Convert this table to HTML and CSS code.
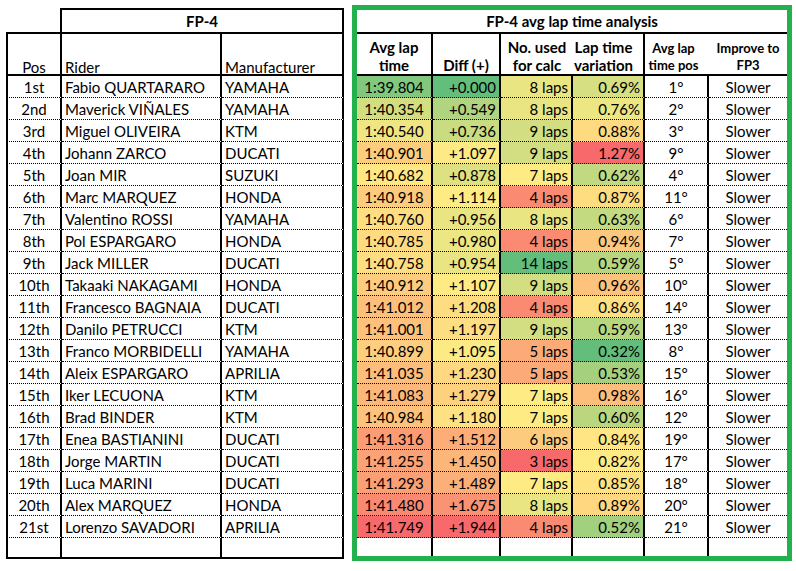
FILE: index.html
```html
<!DOCTYPE html>
<html>
<head>
<meta charset="utf-8">
<title>FP-4 avg lap time analysis</title>
<link rel="stylesheet" href="styles.css">
</head>
<body>
<div class="page">
  <table class="fp">
    <colgroup><col class="w-pos"><col class="w-rider"><col class="w-man"></colgroup>
    <thead>
      <tr class="title"><th class="blank"></th><th colspan="2" class="ttl">FP-4</th></tr>
      <tr class="hdr"><th class="pos">Pos</th><th>Rider</th><th>Manufacturer</th></tr>
    </thead>
    <tbody>
      <tr><td class="pos">1st</td><td>Fabio QUARTARARO</td><td>YAMAHA</td></tr>
      <tr><td class="pos">2nd</td><td>Maverick VIÑALES</td><td>YAMAHA</td></tr>
      <tr><td class="pos">3rd</td><td>Miguel OLIVEIRA</td><td>KTM</td></tr>
      <tr><td class="pos">4th</td><td>Johann ZARCO</td><td>DUCATI</td></tr>
      <tr><td class="pos">5th</td><td>Joan MIR</td><td>SUZUKI</td></tr>
      <tr><td class="pos">6th</td><td>Marc MARQUEZ</td><td>HONDA</td></tr>
      <tr><td class="pos">7th</td><td>Valentino ROSSI</td><td>YAMAHA</td></tr>
      <tr><td class="pos">8th</td><td>Pol ESPARGARO</td><td>HONDA</td></tr>
      <tr><td class="pos">9th</td><td>Jack MILLER</td><td>DUCATI</td></tr>
      <tr><td class="pos">10th</td><td>Takaaki NAKAGAMI</td><td>HONDA</td></tr>
      <tr><td class="pos">11th</td><td>Francesco BAGNAIA</td><td>DUCATI</td></tr>
      <tr><td class="pos">12th</td><td>Danilo PETRUCCI</td><td>KTM</td></tr>
      <tr><td class="pos">13th</td><td>Franco MORBIDELLI</td><td>YAMAHA</td></tr>
      <tr><td class="pos">14th</td><td>Aleix ESPARGARO</td><td>APRILIA</td></tr>
      <tr><td class="pos">15th</td><td>Iker LECUONA</td><td>KTM</td></tr>
      <tr><td class="pos">16th</td><td>Brad BINDER</td><td>KTM</td></tr>
      <tr><td class="pos">17th</td><td>Enea BASTIANINI</td><td>DUCATI</td></tr>
      <tr><td class="pos">18th</td><td>Jorge MARTIN</td><td>DUCATI</td></tr>
      <tr><td class="pos">19th</td><td>Luca MARINI</td><td>DUCATI</td></tr>
      <tr><td class="pos">20th</td><td>Alex MARQUEZ</td><td>HONDA</td></tr>
      <tr><td class="pos">21st</td><td>Lorenzo SAVADORI</td><td>APRILIA</td></tr>
      <tr class="empty"><td class="pos"></td><td></td><td></td></tr>
    </tbody>
  </table>

  <div class="analysis">
    <table class="an">
      <colgroup><col class="w1"><col class="w2"><col class="w3"><col class="w4"><col class="w5"><col class="w6"></colgroup>
      <thead>
        <tr class="title"><th colspan="6" class="ttl">FP-4 avg lap time analysis</th></tr>
        <tr class="hdr">
          <th class="sep">Avg lap<br>time</th>
          <th class="sep">Diff (+)</th>
          <th>No. used<br>for calc</th>
          <th class="sep var">Lap time<br>variation</th>
          <th class="small apos">Avg lap<br>time pos</th>
          <th class="small">Improve to<br>FP3</th>
        </tr>
      </thead>
      <tbody>
        <tr><td class="v-avg">1:39.804</td><td class="v-diff">+0.000</td><td class="v-laps">8 laps</td><td class="v-var">0.69%</td><td class="rank">1°</td><td class="imp">Slower</td></tr>
        <tr><td class="v-avg">1:40.354</td><td class="v-diff">+0.549</td><td class="v-laps">8 laps</td><td class="v-var">0.76%</td><td class="rank">2°</td><td class="imp">Slower</td></tr>
        <tr><td class="v-avg">1:40.540</td><td class="v-diff">+0.736</td><td class="v-laps">9 laps</td><td class="v-var">0.88%</td><td class="rank">3°</td><td class="imp">Slower</td></tr>
        <tr><td class="v-avg">1:40.901</td><td class="v-diff">+1.097</td><td class="v-laps">9 laps</td><td class="v-var">1.27%</td><td class="rank">9°</td><td class="imp">Slower</td></tr>
        <tr><td class="v-avg">1:40.682</td><td class="v-diff">+0.878</td><td class="v-laps">7 laps</td><td class="v-var">0.62%</td><td class="rank">4°</td><td class="imp">Slower</td></tr>
        <tr><td class="v-avg">1:40.918</td><td class="v-diff">+1.114</td><td class="v-laps">4 laps</td><td class="v-var">0.87%</td><td class="rank">11°</td><td class="imp">Slower</td></tr>
        <tr><td class="v-avg">1:40.760</td><td class="v-diff">+0.956</td><td class="v-laps">8 laps</td><td class="v-var">0.63%</td><td class="rank">6°</td><td class="imp">Slower</td></tr>
        <tr><td class="v-avg">1:40.785</td><td class="v-diff">+0.980</td><td class="v-laps">4 laps</td><td class="v-var">0.94%</td><td class="rank">7°</td><td class="imp">Slower</td></tr>
        <tr><td class="v-avg">1:40.758</td><td class="v-diff">+0.954</td><td class="v-laps">14 laps</td><td class="v-var">0.59%</td><td class="rank">5°</td><td class="imp">Slower</td></tr>
        <tr><td class="v-avg">1:40.912</td><td class="v-diff">+1.107</td><td class="v-laps">9 laps</td><td class="v-var">0.96%</td><td class="rank">10°</td><td class="imp">Slower</td></tr>
        <tr><td class="v-avg">1:41.012</td><td class="v-diff">+1.208</td><td class="v-laps">4 laps</td><td class="v-var">0.86%</td><td class="rank">14°</td><td class="imp">Slower</td></tr>
        <tr><td class="v-avg">1:41.001</td><td class="v-diff">+1.197</td><td class="v-laps">9 laps</td><td class="v-var">0.59%</td><td class="rank">13°</td><td class="imp">Slower</td></tr>
        <tr><td class="v-avg">1:40.899</td><td class="v-diff">+1.095</td><td class="v-laps">5 laps</td><td class="v-var">0.32%</td><td class="rank">8°</td><td class="imp">Slower</td></tr>
        <tr><td class="v-avg">1:41.035</td><td class="v-diff">+1.230</td><td class="v-laps">5 laps</td><td class="v-var">0.53%</td><td class="rank">15°</td><td class="imp">Slower</td></tr>
        <tr><td class="v-avg">1:41.083</td><td class="v-diff">+1.279</td><td class="v-laps">7 laps</td><td class="v-var">0.98%</td><td class="rank">16°</td><td class="imp">Slower</td></tr>
        <tr><td class="v-avg">1:40.984</td><td class="v-diff">+1.180</td><td class="v-laps">7 laps</td><td class="v-var">0.60%</td><td class="rank">12°</td><td class="imp">Slower</td></tr>
        <tr><td class="v-avg">1:41.316</td><td class="v-diff">+1.512</td><td class="v-laps">6 laps</td><td class="v-var">0.84%</td><td class="rank">19°</td><td class="imp">Slower</td></tr>
        <tr><td class="v-avg">1:41.255</td><td class="v-diff">+1.450</td><td class="v-laps">3 laps</td><td class="v-var">0.82%</td><td class="rank">17°</td><td class="imp">Slower</td></tr>
        <tr><td class="v-avg">1:41.293</td><td class="v-diff">+1.489</td><td class="v-laps">7 laps</td><td class="v-var">0.85%</td><td class="rank">18°</td><td class="imp">Slower</td></tr>
        <tr><td class="v-avg">1:41.480</td><td class="v-diff">+1.675</td><td class="v-laps">8 laps</td><td class="v-var">0.89%</td><td class="rank">20°</td><td class="imp">Slower</td></tr>
        <tr><td class="v-avg">1:41.749</td><td class="v-diff">+1.944</td><td class="v-laps">4 laps</td><td class="v-var">0.52%</td><td class="rank">21°</td><td class="imp">Slower</td></tr>
        <tr class="empty"><td></td><td></td><td></td><td></td><td></td><td></td></tr>
      </tbody>
    </table>
  </div>
</div>
<script src="script.js"></script>
</body>
</html>
```

FILE: styles.css
```css
* { box-sizing: border-box; }
html, body { margin: 0; background: #fff; }
body {
  font-family: Lato, "Liberation Sans", sans-serif;
  color: #000;
}
.page {
  display: flex;
  align-items: flex-start;
  padding-left: 6px;
}
table {
  border-collapse: separate;
  border-spacing: 0;
  table-layout: fixed;
  font-size: 15px;
  line-height: 18px;
}
th, td {
  padding: 0 3px;
  white-space: nowrap;
  overflow: hidden;
  vertical-align: middle;
}
th { font-weight: 700; }

/* ---------- left table ---------- */
.fp { width: 338px; margin-top: 8px; }
.fp .w-pos { width: 56px; }
.fp .w-rider { width: 160px; }
.fp .w-man { width: 122px; }
.fp .title { height: 26px; }
.fp .blank {
  border-right: 2px solid #000;
  border-bottom: 2px solid #000;
}
.fp .ttl {
  border-top: 2px solid #000;
  border-right: 2px solid #000;
  border-bottom: 2px solid #000;
  text-align: center;
}
.fp .hdr { height: 42px; }
.fp .hdr th {
  font-weight: 400;
  text-align: left;
  vertical-align: bottom;
  line-height: 13px;
  border-right: 2px solid #000;
  border-bottom: 2px solid #000;
}
.fp .hdr th.pos { border-left: 2px solid #000; text-align: center; }
.fp tbody tr { height: 22px; }
.fp tbody td {
  border-right: 2px solid #000;
  border-bottom: 1px dotted #000;
}
.fp tbody td.pos { border-left: 2px solid #000; text-align: center; }
.fp tbody tr.empty { height: 21px; }
.fp tbody tr.empty td { border-bottom: 2px solid #000; }

/* ---------- right table ---------- */
.analysis {
  margin-top: 5px;
  margin-left: 8px;
  border: 5px solid #22b14c;
}
.an { width: 430px; }
.an .w1 { width: 76px; }
.an .w2 { width: 68px; }
.an .w3 { width: 72px; }
.an .w4 { width: 72px; }
.an .w5 { width: 64px; }
.an .w6 { width: 78px; }
.an .title { height: 24px; }
.an .ttl {
  text-align: center;
  border-bottom: 2px solid #000;
}
.an .hdr { height: 42px; }
.an .hdr th {
  text-align: center;
  vertical-align: bottom;
  border-bottom: 2px solid #000;
  padding: 0 1px;
}
.an .hdr th.sep { border-right: 2px solid #000; }
.an .hdr th.var { padding-right: 10px; }
.an .hdr th.small { font-size: 13px; line-height: 17px; }
.an .hdr th.apos { padding-right: 8px; }
.an tbody tr { height: 22px; }
.an tbody td {
  border-right: 2px solid #000;
  border-bottom: 1px dotted #000;
}
.an tbody td:last-child { border-right: 0; }
.an tbody tr.empty { height: 18px; }
.an tbody tr.empty td { border-bottom: 0; }
.an .v-avg { text-align: center; }
.an .v-diff, .an .v-laps, .an .v-var { text-align: right; }
.an .rank, .an .imp { text-align: center; }
```

FILE: script.js
```js
(function () {
  var G = [99, 190, 123], Y = [255, 235, 132], R = [248, 105, 107];
  function mix(a, b, s) {
    s = Math.max(0, Math.min(1, s));
    return a.map(function (v, i) { return Math.round(v + (b[i] - v) * s); });
  }
  function color(v, c) {
    var low = c.lowGood ? G : R, high = c.lowGood ? R : G, rgb;
    if (v <= c.mid) rgb = mix(low, Y, (v - c.lo) / (c.mid - c.lo));
    else rgb = mix(Y, high, (v - c.mid) / (c.hi - c.mid));
    return 'rgb(' + rgb.join(',') + ')';
  }
  function lap(t) { var p = t.split(':'); return Number(p[0]) * 60 + parseFloat(p[1]); }
  var cols = {
    'v-avg': { lo: 99.6, mid: 100.65, hi: 101.749, lowGood: true, parse: lap },
    'v-diff': { lo: 0, mid: 1.114, hi: 1.944, lowGood: true, parse: parseFloat },
    'v-laps': { lo: 3, mid: 7, hi: 14, lowGood: false, parse: parseFloat },
    'v-var': { lo: 0.32, mid: 0.82, hi: 1.27, lowGood: true, parse: parseFloat }
  };
  Object.keys(cols).forEach(function (k) {
    var cells = document.querySelectorAll('td.' + k);
    Array.prototype.forEach.call(cells, function (td) {
      td.style.backgroundColor = color(cols[k].parse(td.textContent), cols[k]);
    });
  });
})();
```
